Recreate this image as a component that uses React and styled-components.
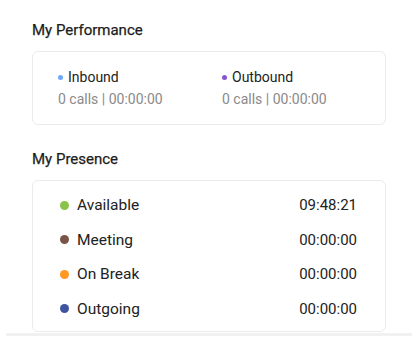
import styled, { createGlobalStyle } from "styled-components";

const GlobalStyle = createGlobalStyle`
  body {
    margin: 0;
    background: #fff;
    font-family: Roboto, "Liberation Sans", sans-serif;
    color: #222;
  }
`;

const callStats = [
  { id: "in", name: "Inbound", color: "#6fa8f5", calls: 0, time: "00:00:00" },
  { id: "out", name: "Outbound", color: "#8557cf", calls: 0, time: "00:00:00" },
];

const presence = [
  { id: "available", name: "Available", color: "#8bc34a", time: "09:48:21" },
  { id: "meeting", name: "Meeting", color: "#795548", time: "00:00:00" },
  { id: "break", name: "On Break", color: "#ff9722", time: "00:00:00" },
  { id: "outgoing", name: "Outgoing", color: "#3f54a0", time: "00:00:00" },
];

const App = () => {
  return (
    <>
      <GlobalStyle />
      <Page>
        <Section>
          <Title>My Performance</Title>
          <PerfCard>
            {callStats.map((s) => (
              <Stat key={s.id}>
                <StatLabel>
                  <Dot $color={s.color} $size={5} />
                  {s.name}
                </StatLabel>
                <StatValue>
                  {s.calls} calls | {s.time}
                </StatValue>
              </Stat>
            ))}
          </PerfCard>
        </Section>

        <Section>
          <Title>My Presence</Title>
          <PresenceCard>
            {presence.map((p) => (
              <PresenceRow key={p.id}>
                <PresenceName>
                  <Dot $color={p.color} $size={9} />
                  {p.name}
                </PresenceName>
                <PresenceTime>{p.time}</PresenceTime>
              </PresenceRow>
            ))}
          </PresenceCard>
        </Section>
      </Page>
      <Divider />
    </>
  );
};

const Page = styled.main`
  display: flex;
  flex-direction: column;
  gap: 25px;
  padding: 21px 32px 0;
`;

const Section = styled.section`
  display: flex;
  flex-direction: column;
  gap: 12px;
`;

const Title = styled.h2`
  margin: 0;
  font-size: 15px;
  line-height: 18px;
  font-weight: 400;
  color: #1c1c1c;
  -webkit-text-stroke: 0.25px #1c1c1c;
`;

const Card = styled.div`
  border: 1px solid #ebebeb;
  border-radius: 6px;
  background: #fff;
`;

const PerfCard = styled(Card)`
  display: grid;
  grid-template-columns: 164px 1fr;
  padding: 16px 25px 15px;
`;

const Stat = styled.div`
  display: flex;
  flex-direction: column;
  gap: 3px;
`;

const StatLabel = styled.div`
  display: flex;
  align-items: center;
  gap: 5px;
  font-size: 14px;
  line-height: 18px;
  color: #222;
`;

const StatValue = styled.div`
  font-size: 14px;
  line-height: 20px;
  color: #8a8a8a;
`;

const Dot = styled.span`
  flex: none;
  width: ${(p) => p.$size}px;
  height: ${(p) => p.$size}px;
  border-radius: 50%;
  background: ${(p) => p.$color};
`;

const PresenceCard = styled(Card)`
  display: flex;
  flex-direction: column;
  padding: 7px 28px 5px 27px;
`;

const PresenceRow = styled.div`
  display: flex;
  align-items: center;
  justify-content: space-between;
  height: 34.5px;
`;

const PresenceName = styled.div`
  display: flex;
  align-items: center;
  gap: 8px;
  font-size: 15.5px;
  color: #222;
`;

const PresenceTime = styled.div`
  font-size: 15px;
  color: #222;
`;

const Divider = styled.div`
  height: 3px;
  margin: 1px 6px 0;
  background: #f1f1f1;
`;

export default App;
